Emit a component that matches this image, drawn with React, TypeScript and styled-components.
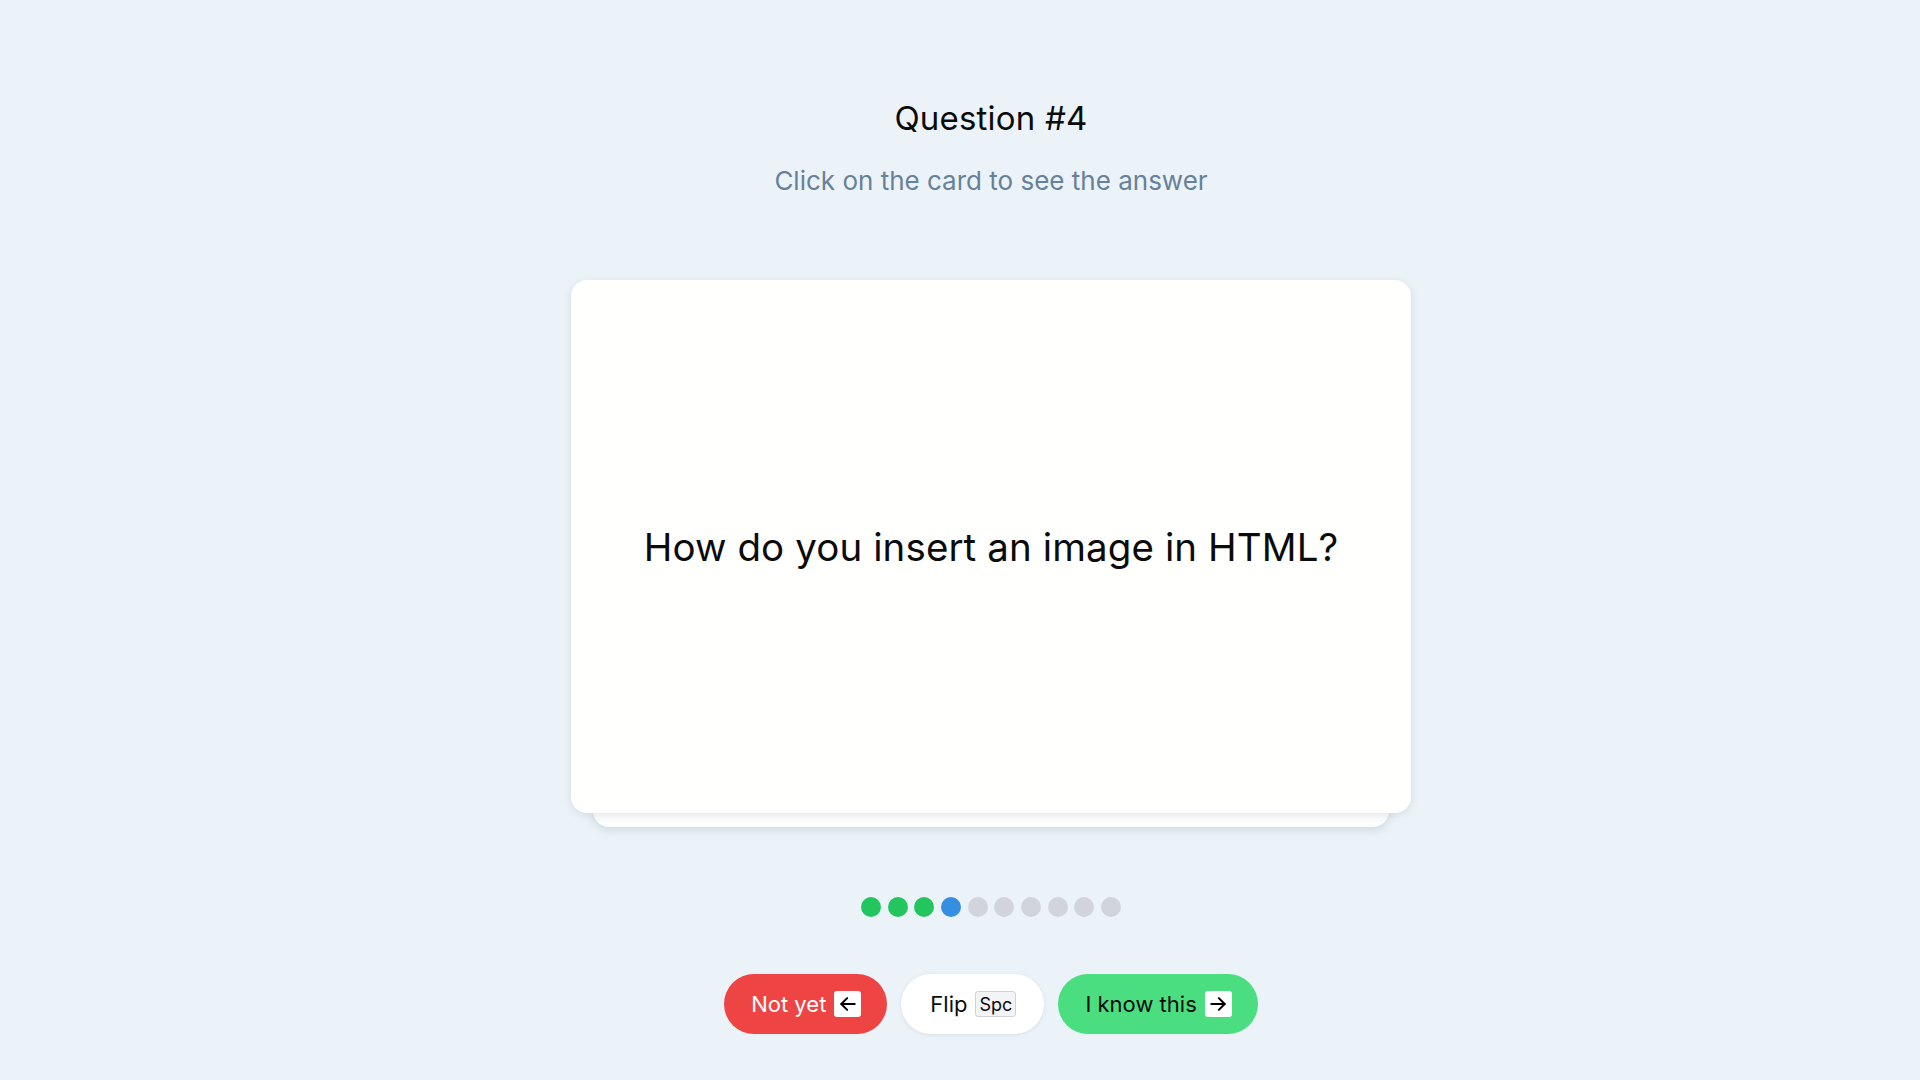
import React from "react";
import styled, { createGlobalStyle } from "styled-components";

const Global = createGlobalStyle`
  html, body { margin: 0; padding: 0; }
  body {
    background: #ecf3f8;
    font-family: "Inter", "Noto Sans", sans-serif;
    color: #0b0b0b;
  }
`;

const Page = styled.main`
  min-height: 1080px;
  box-sizing: border-box;
  padding-left: 62px;
  display: flex;
  flex-direction: column;
  align-items: center;
`;

const Title = styled.h1`
  margin: 98px 0 0;
  font-size: 33px;
  line-height: 40px;
  font-weight: 400;
  letter-spacing: 0.2px;
`;

const Subtitle = styled.p`
  margin: 28px 0 0;
  font-size: 26px;
  line-height: 30px;
  color: #66819a;
  font-weight: 400;
`;

const CardStack = styled.div`
  position: relative;
  isolation: isolate;
  margin-top: 84px;
  &::after {
    content: "";
    position: absolute;
    left: 22px;
    right: 22px;
    bottom: -14px;
    height: 60px;
    background: #fdfdfd;
    border-radius: 0 0 16px 16px;
    box-shadow: 0 4px 8px rgba(120, 140, 160, 0.22);
    z-index: -1;
  }
`;

const Card = styled.div`
  width: 840px;
  height: 533px;
  background: #fffffe;
  border-radius: 16px;
  box-shadow: 0 2px 8px rgba(110, 130, 150, 0.2);
  display: flex;
  align-items: center;
  justify-content: center;
  cursor: pointer;
`;

const Question = styled.div`
  font-size: 38.5px;
  font-weight: 400;
  letter-spacing: 0.1px;
`;

const Dots = styled.div`
  margin-top: 84px;
  display: flex;
  gap: 6.67px;
`;

const Dot = styled.span<{ $state: "done" | "current" | "todo" }>`
  width: 20px;
  height: 20px;
  border-radius: 50%;
  background: ${(p) =>
    p.$state === "done" ? "#22c55e" : p.$state === "current" ? "#368ee0" : "#d1d5db"};
`;

const Buttons = styled.div`
  margin-top: 57px;
  display: flex;
  gap: 14px;
`;

const Button = styled.button<{ $variant: "red" | "white" | "green" }>`
  height: 60px;
  padding: 0 ${(p) => (p.$variant === "white" ? "28px 0 29px" : "26px 0 27px")};
  border: none;
  border-radius: 30px;
  display: flex;
  align-items: center;
  gap: 8px;
  font-family: inherit;
  font-size: 22px;
  cursor: pointer;
  background: ${(p) =>
    p.$variant === "red" ? "#ef4444" : p.$variant === "green" ? "#4ade80" : "#ffffff"};
  color: ${(p) => (p.$variant === "red" ? "#ffffff" : "#0b0b0b")};
  box-shadow: ${(p) => (p.$variant === "white" ? "0 1px 4px rgba(120,140,160,0.18)" : "none")};
`;

const KeyBox = styled.span<{ $wide?: boolean }>`
  height: 26px;
  min-width: ${(p) => (p.$wide ? "41px" : "27px")};
  box-sizing: border-box;
  padding: 0 ${(p) => (p.$wide ? "3px" : "0")};
  border-radius: 3px;
  background: ${(p) => (p.$wide ? "#f3f4f6" : "#ffffff")};
  border: ${(p) => (p.$wide ? "1px solid #cfd3d9" : "none")};
  display: inline-flex;
  align-items: center;
  justify-content: center;
  font-size: 18px;
  color: #0b0b0b;
`;

const Arrow = ({ dir }: { dir: "left" | "right" }) => (
  <svg width="20" height="20" viewBox="0 0 24 24" fill="none" stroke="#000" strokeWidth="2.4" strokeLinecap="round" strokeLinejoin="round">
    {dir === "left" ? (
      <>
        <path d="M20 12H4" />
        <path d="M11 5l-7 7 7 7" />
      </>
    ) : (
      <>
        <path d="M4 12h16" />
        <path d="M13 5l7 7-7 7" />
      </>
    )}
  </svg>
);

const states: ("done" | "current" | "todo")[] = [
  "done", "done", "done", "current", "todo", "todo", "todo", "todo", "todo", "todo",
];

export default function App() {
  return (
    <>
      <Global />
      <Page>
        <Title>Question #4</Title>
        <Subtitle>Click on the card to see the answer</Subtitle>
        <CardStack>
          <Card>
            <Question>How do you insert an image in HTML?</Question>
          </Card>
        </CardStack>
        <Dots>
          {states.map((s, i) => (
            <Dot key={i} $state={s} />
          ))}
        </Dots>
        <Buttons>
          <Button $variant="red">
            Not yet
            <KeyBox>
              <Arrow dir="left" />
            </KeyBox>
          </Button>
          <Button $variant="white">
            Flip
            <KeyBox $wide>Spc</KeyBox>
          </Button>
          <Button $variant="green">
            I know this
            <KeyBox>
              <Arrow dir="right" />
            </KeyBox>
          </Button>
        </Buttons>
      </Page>
    </>
  );
}
